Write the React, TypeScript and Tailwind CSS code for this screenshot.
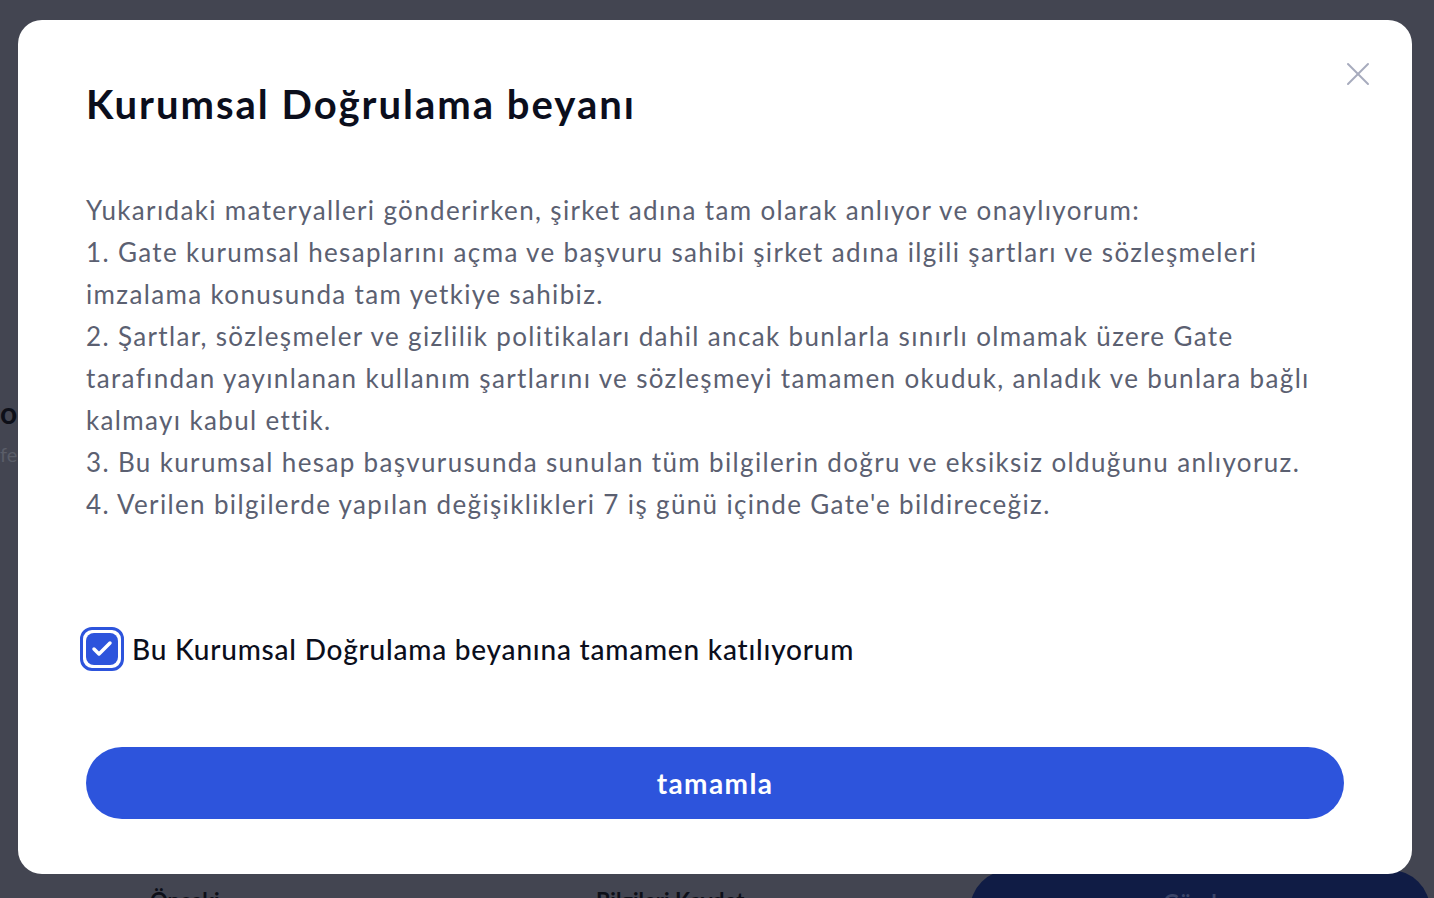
import { X, Check } from "lucide-react"

const lines = [
    "Yukarıdaki materyalleri gönderirken, şirket adına tam olarak anlıyor ve onaylıyorum:",
    "1. Gate kurumsal hesaplarını açma ve başvuru sahibi şirket adına ilgili şartları ve sözleşmeleri",
    "imzalama konusunda tam yetkiye sahibiz.",
    "2. Şartlar, sözleşmeler ve gizlilik politikaları dahil ancak bunlarla sınırlı olmamak üzere Gate",
    "tarafından yayınlanan kullanım şartlarını ve sözleşmeyi tamamen okuduk, anladık ve bunlara bağlı",
    "kalmayı kabul ettik.",
    "3. Bu kurumsal hesap başvurusunda sunulan tüm bilgilerin doğru ve eksiksiz olduğunu anlıyoruz.",
    "4. Verilen bilgilerde yapılan değişiklikleri 7 iş günü içinde Gate'e bildireceğiz.",
]

export default function App() {
    return (
        <div className="relative h-[898px] w-[1434px] overflow-hidden bg-[#434551] font-['Lato','Noto_Sans',sans-serif]">
            {/* page behind the overlay */}
            <div className="flex h-full flex-col">
                <div className="pt-[392px] text-[30px] font-bold leading-[40px] text-[#0d0f18]">o</div>
                <div className="pt-[8px] text-[20px] leading-[28px] text-[#5a5d68]">fe</div>
                <div className="mt-auto flex h-[30px] items-start">
                    <div className="w-[580px] shrink-0 pl-[150px] pt-[18px] text-[22px] font-bold leading-[30px] text-[#0d0f18]">Önceki</div>
                    <div className="w-[390px] shrink-0 pl-[16px] pt-[18px] text-[22px] font-bold leading-[30px] text-[#0d0f18]">Bilgileri Kaydet</div>
                    <div className="mt-[2px] flex h-[80px] w-[460px] shrink-0 justify-center rounded-full bg-[#101c45] pt-[18px] text-[22px] font-bold leading-[30px] text-[#3a4468]">Gönder</div>
                </div>
            </div>

            {/* modal */}
            <div className="absolute left-[18px] top-[20px] flex h-[854px] w-[1394px] flex-col rounded-[24px] bg-white px-[68px] pt-[60px]">
                <button className="absolute right-[34px] top-[34px] text-[#a7abbd]">
                    <X size={40} strokeWidth={1.2} />
                </button>

                <h1 className="text-[40px] font-bold leading-[48px] tracking-[0.05em] text-[#0b0e1c]">Kurumsal Doğrulama beyanı</h1>

                <div className="mt-[61px] text-[26px] leading-[42px] tracking-[0.052em] text-[#5b6071]">
                    {lines.map((l) => (
                        <div key={l} className="whitespace-nowrap">{l}</div>
                    ))}
                </div>

                <label className="mt-[102px] -ml-[6px] flex items-center gap-[8px]">
                    <span className="flex h-[44px] w-[44px] items-center justify-center rounded-[12px] border-[3px] border-[#2d54dc] bg-white">
                        <span className="flex h-[32px] w-[32px] items-center justify-center rounded-[8px] bg-[#2d54dc] text-white">
                            <Check size={24} strokeWidth={3.5} />
                        </span>
                    </span>
                    <span className="text-[28px] font-medium tracking-[0.028em] text-[#0b0e1c]">Bu Kurumsal Doğrulama beyanına tamamen katılıyorum</span>
                </label>

                <button className="mt-[76px] h-[72px] w-full rounded-full bg-[#2d54dc] text-[28px] font-bold tracking-[0.05em] text-white">tamamla</button>
            </div>
        </div>
    )
}
